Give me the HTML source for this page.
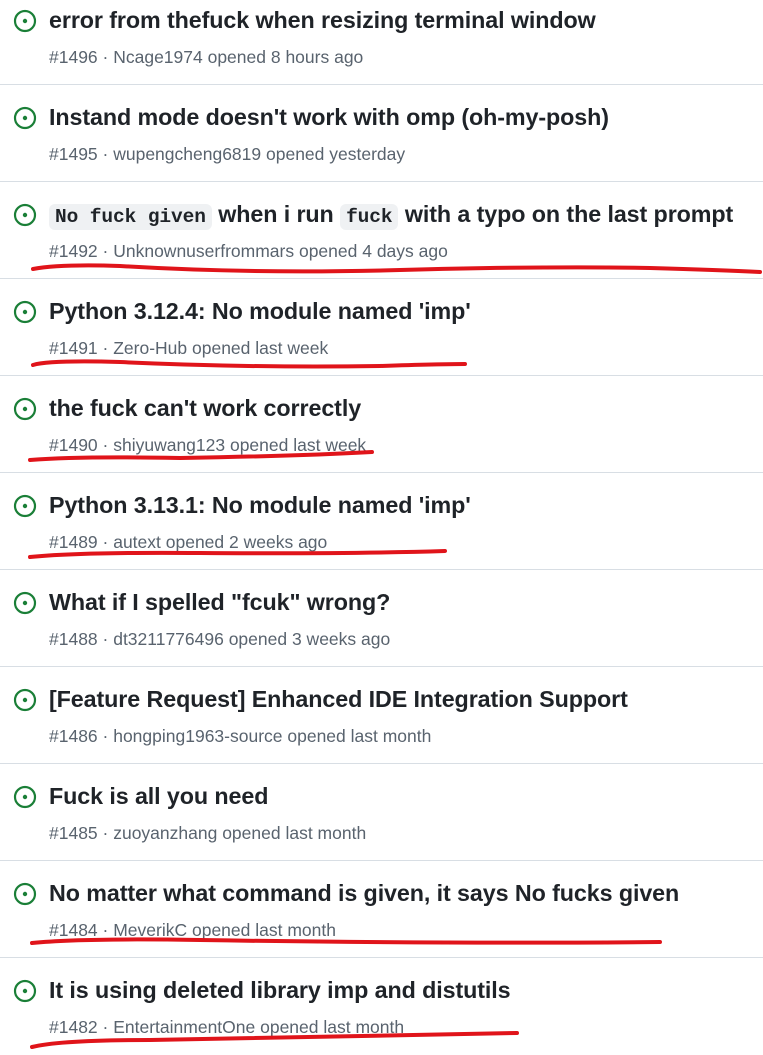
<!DOCTYPE html>
<html><head><meta charset="utf-8"><style>
body{margin:0;width:763px;height:1050px;background:#fff;position:relative;overflow:hidden;font-family:"Liberation Sans",sans-serif}
.row{position:absolute;left:0;width:763px;height:97px;border-bottom:1px solid #d8dee4;box-sizing:border-box}
.ic{position:absolute;left:13px;top:21px}
.t{position:absolute;left:49px;top:19px;font-size:23.3px;font-weight:bold;color:#1f2328;white-space:nowrap;letter-spacing:-0.1px}
.m{position:absolute;left:49px;top:59px;font-size:17.5px;color:#59636e;white-space:nowrap}
code{font-family:"Liberation Mono",monospace;background:#eff1f3;border-radius:6px;padding:2px 6px;font-size:19.5px}
svg.u{position:absolute;left:0;top:0}
</style></head><body>
<div class="row" style="top:-12px"><svg class="ic" width="24" height="24" viewBox="0 0 24 24"><circle cx="12" cy="12" r="10" fill="none" stroke="#1a7f37" stroke-width="2.2"/><circle cx="12" cy="12" r="2.2" fill="#1a7f37"/></svg><div class="t">error from thefuck when resizing terminal window</div><div class="m">#1496 · Ncage1974 opened 8 hours ago</div></div>
<div class="row" style="top:85px"><svg class="ic" width="24" height="24" viewBox="0 0 24 24"><circle cx="12" cy="12" r="10" fill="none" stroke="#1a7f37" stroke-width="2.2"/><circle cx="12" cy="12" r="2.2" fill="#1a7f37"/></svg><div class="t">Instand mode doesn't work with omp (oh-my-posh)</div><div class="m">#1495 · wupengcheng6819 opened yesterday</div></div>
<div class="row" style="top:182px"><svg class="ic" width="24" height="24" viewBox="0 0 24 24"><circle cx="12" cy="12" r="10" fill="none" stroke="#1a7f37" stroke-width="2.2"/><circle cx="12" cy="12" r="2.2" fill="#1a7f37"/></svg><div class="t"><code>No fuck given</code> when i run <code>fuck</code> with a typo on the last prompt</div><div class="m">#1492 · Unknownuserfrommars opened 4 days ago</div></div>
<div class="row" style="top:279px"><svg class="ic" width="24" height="24" viewBox="0 0 24 24"><circle cx="12" cy="12" r="10" fill="none" stroke="#1a7f37" stroke-width="2.2"/><circle cx="12" cy="12" r="2.2" fill="#1a7f37"/></svg><div class="t">Python 3.12.4: No module named 'imp'</div><div class="m">#1491 · Zero-Hub opened last week</div></div>
<div class="row" style="top:376px"><svg class="ic" width="24" height="24" viewBox="0 0 24 24"><circle cx="12" cy="12" r="10" fill="none" stroke="#1a7f37" stroke-width="2.2"/><circle cx="12" cy="12" r="2.2" fill="#1a7f37"/></svg><div class="t">the fuck can't work correctly</div><div class="m">#1490 · shiyuwang123 opened last week</div></div>
<div class="row" style="top:473px"><svg class="ic" width="24" height="24" viewBox="0 0 24 24"><circle cx="12" cy="12" r="10" fill="none" stroke="#1a7f37" stroke-width="2.2"/><circle cx="12" cy="12" r="2.2" fill="#1a7f37"/></svg><div class="t">Python 3.13.1: No module named 'imp'</div><div class="m">#1489 · autext opened 2 weeks ago</div></div>
<div class="row" style="top:570px"><svg class="ic" width="24" height="24" viewBox="0 0 24 24"><circle cx="12" cy="12" r="10" fill="none" stroke="#1a7f37" stroke-width="2.2"/><circle cx="12" cy="12" r="2.2" fill="#1a7f37"/></svg><div class="t">What if I spelled "fcuk" wrong?</div><div class="m">#1488 · dt3211776496 opened 3 weeks ago</div></div>
<div class="row" style="top:667px"><svg class="ic" width="24" height="24" viewBox="0 0 24 24"><circle cx="12" cy="12" r="10" fill="none" stroke="#1a7f37" stroke-width="2.2"/><circle cx="12" cy="12" r="2.2" fill="#1a7f37"/></svg><div class="t">[Feature Request] Enhanced IDE Integration Support</div><div class="m">#1486 · hongping1963-source opened last month</div></div>
<div class="row" style="top:764px"><svg class="ic" width="24" height="24" viewBox="0 0 24 24"><circle cx="12" cy="12" r="10" fill="none" stroke="#1a7f37" stroke-width="2.2"/><circle cx="12" cy="12" r="2.2" fill="#1a7f37"/></svg><div class="t">Fuck is all you need</div><div class="m">#1485 · zuoyanzhang opened last month</div></div>
<div class="row" style="top:861px"><svg class="ic" width="24" height="24" viewBox="0 0 24 24"><circle cx="12" cy="12" r="10" fill="none" stroke="#1a7f37" stroke-width="2.2"/><circle cx="12" cy="12" r="2.2" fill="#1a7f37"/></svg><div class="t">No matter what command is given, it says No fucks given</div><div class="m">#1484 · MeverikC opened last month</div></div>
<div class="row" style="top:958px;border-bottom:none"><svg class="ic" width="24" height="24" viewBox="0 0 24 24"><circle cx="12" cy="12" r="10" fill="none" stroke="#1a7f37" stroke-width="2.2"/><circle cx="12" cy="12" r="2.2" fill="#1a7f37"/></svg><div class="t">It is using deleted library imp and distutils</div><div class="m">#1482 · EntertainmentOne opened last month</div></div>
<svg class="u" width="763" height="1050" fill="none" stroke="#e0141a" stroke-width="4" stroke-linecap="round">
<path d="M33 269 Q60 264 120 266 Q250 274 400 270 Q550 266 650 268 Q720 270 760 272"/>
<path d="M33 365 Q50 360 120 362 Q250 368 380 366 Q440 364 465 364"/>
<path d="M30 460 Q80 456 180 458 Q300 456 372 452"/>
<path d="M30 557 Q80 552 200 553 Q350 554 445 551"/>
<path d="M32 943 Q80 938 200 940 Q450 944 660 942"/>
<path d="M32 1047 Q60 1040 150 1040 Q350 1036 517 1033"/>
</svg>
</body></html>
